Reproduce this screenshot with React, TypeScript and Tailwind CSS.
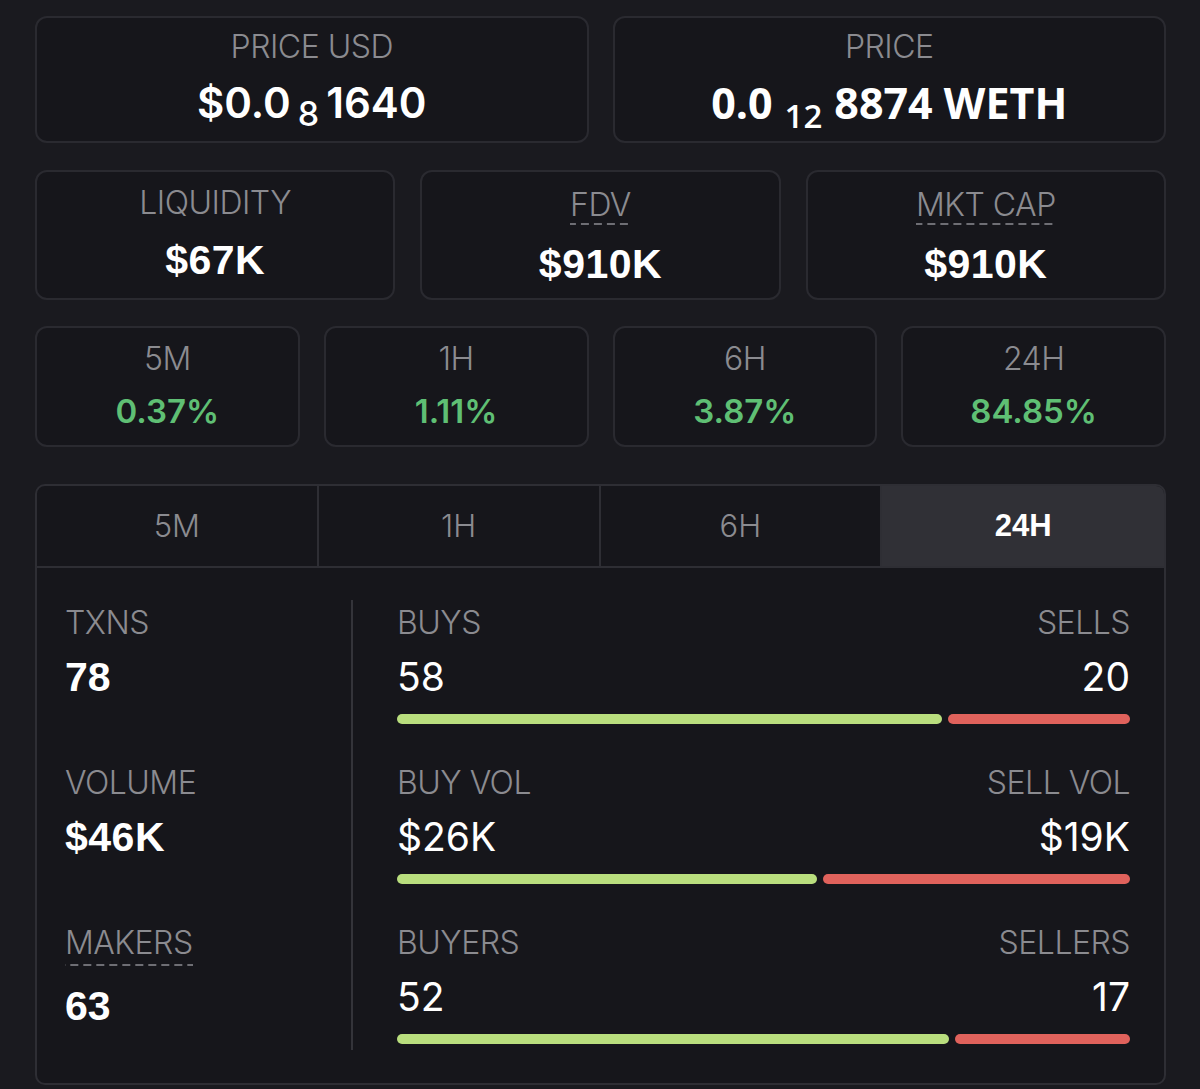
import type { ReactNode } from 'react';

const sans = "font-['Inter','Noto_Sans',sans-serif]";
const arial = "font-['Liberation_Sans','Arial',sans-serif]";

const dashed =
  'inline-block bg-[linear-gradient(to_right,#6e6e74_60%,transparent_0)] bg-[length:13px_2px] bg-bottom bg-repeat-x';

interface Change {
  label: string;
  value: string;
}

const changes: Change[] = [
  { label: '5M', value: '0.37%' },
  { label: '1H', value: '1.11%' },
  { label: '6H', value: '3.87%' },
  { label: '24H', value: '84.85%' },
];

const tabs = ['5M', '1H', '6H', '24H'];

interface Split {
  left: string;
  right: string;
  leftValue: string;
  rightValue: string;
  ratio: number;
}

const splits: Split[] = [
  { left: 'BUYS', right: 'SELLS', leftValue: '58', rightValue: '20', ratio: 58 / 78 },
  { left: 'BUY VOL', right: 'SELL VOL', leftValue: '$26K', rightValue: '$19K', ratio: 26 / 45.4 },
  { left: 'BUYERS', right: 'SELLERS', leftValue: '52', rightValue: '17', ratio: 52 / 69 },
];

const Card = ({ className, children }: { className?: string; children: ReactNode }) => (
  <div
    className={`flex flex-col items-center rounded-[12px] border-2 border-[#2a2a30] bg-[#16161b] ${className ?? ''}`}
  >
    {children}
  </div>
);

const Label = ({ children, className }: { children: ReactNode; className?: string }) => (
  <div className={`${sans} font-light text-[32px] tracking-[-0.5px] text-[#8b8b90] ${className ?? ''}`}>
    {children}
  </div>
);

const App = () => {
  return (
    <div className={`w-[1200px] h-[1089px] overflow-hidden bg-[#1a1a1f] pl-[35px] pr-[34px] pt-[16px] ${sans}`}>
      {/* price row */}
      <div className="grid grid-cols-2 gap-[24px] h-[127px]">
        <Card className="pt-[11px]">
          <Label className="leading-[36px]">PRICE USD</Label>
          <div className="mt-[14px] flex items-baseline leading-[48px] text-[42px] font-semibold text-white">
            <span>$0.0</span>
            <span className="mx-[7px] text-[34px] font-medium relative top-[8px]">8</span>
            <span>1640</span>
          </div>
        </Card>
        <Card className="pt-[11px]">
          <Label className="leading-[36px]">PRICE</Label>
          <div className="mt-[14px] flex items-baseline leading-[48px] text-[43px] font-bold text-white font-['Open_Sans',sans-serif]">
            <span>0.0</span>
            <span className="mx-[12px] text-[33px] font-semibold relative top-[9px]">12</span>
            <span>8874 WETH</span>
          </div>
        </Card>
      </div>

      {/* liquidity / fdv / market cap */}
      <div className="mt-[27px] grid grid-cols-3 gap-[25px] h-[130px]">
        {[
          { label: 'LIQUIDITY', value: '$67K', underline: false },
          { label: 'FDV', value: '$910K', underline: true },
          { label: 'MKT CAP', value: '$910K', underline: true },
        ].map((item) => (
          <Card key={item.label} className="pt-[13px]">
            <Label className="leading-[36px]">
              <span className={item.underline ? `${dashed} leading-[40px]` : ''}>{item.label}</span>
            </Label>
            <div className={`mt-[15px] leading-[48px] text-[41px] font-bold tracking-[0.5px] text-white ${arial}`}>
              {item.value}
            </div>
          </Card>
        ))}
      </div>

      {/* price change */}
      <div className="mt-[26px] grid grid-cols-4 gap-[24px] h-[121px]">
        {changes.map((c) => (
          <Card key={c.label} className="pt-[13px]">
            <Label className="leading-[36px]">{c.label}</Label>
            <div className="mt-[14px] leading-[40px] text-[33px] font-semibold text-[#5fbf74]">{c.value}</div>
          </Card>
        ))}
      </div>

      {/* transactions panel */}
      <div className="mt-[37px] h-[601px] rounded-[10px] border-2 border-[#2e2e34] bg-[#16161b] overflow-hidden">
        <div className="grid grid-cols-4 h-[82px] border-b-2 border-[#2e2e34]">
          {tabs.map((t, i) => (
            <div
              key={t}
              className={`flex items-center justify-center ${i < 3 ? 'border-r-2 border-[#2e2e34]' : ''} ${
                t === '24H' ? 'bg-[#303036]' : ''
              }`}
            >
              {t === '24H' ? (
                <span className={`text-[31px] font-bold text-white ${arial}`}>{t}</span>
              ) : (
                <span className="text-[31px] font-light text-[#8b8b90]">{t}</span>
              )}
            </div>
          ))}
        </div>

        <div className="flex pt-[32px] pb-[33px]">
          <div className="w-[316px] pl-[28px] pb-[6px] border-r-2 border-[#34343a]">
            <Label className="leading-[46px]">TXNS</Label>
            <div className={`mt-[6px] leading-[50px] text-[41px] font-bold text-white ${arial}`}>78</div>

            <Label className="mt-[58px] leading-[46px]">VOLUME</Label>
            <div className={`mt-[6px] leading-[50px] text-[41px] font-bold tracking-[0.5px] text-white ${arial}`}>
              $46K
            </div>

            <Label className="mt-[58px] leading-[46px]">
              <span className={dashed}>MAKERS</span>
            </Label>
            <div className={`mt-[15px] leading-[50px] text-[41px] font-bold text-white ${arial}`}>63</div>
          </div>

          <div className="flex-1 pl-[44px] pr-[34px] pb-[6px]">
            {splits.map((s, i) => (
              <div key={s.left} className={i > 0 ? 'mt-[36px]' : ''}>
                <div className="flex justify-between">
                  <Label className="leading-[46px]">{s.left}</Label>
                  <Label className="leading-[46px]">{s.right}</Label>
                </div>
                <div className="mt-[6px] flex justify-between leading-[50px] text-[39px] font-normal text-white">
                  <span>{s.leftValue}</span>
                  <span>{s.rightValue}</span>
                </div>
                <div className="mt-[12px] flex gap-[6px] h-[10px]">
                  <div className="rounded-full bg-[#b9de7e]" style={{ width: `${s.ratio * 100}%` }} />
                  <div className="flex-1 rounded-full bg-[#e0625c]" />
                </div>
              </div>
            ))}
          </div>
        </div>
      </div>
    </div>
  );
};

export default App;
